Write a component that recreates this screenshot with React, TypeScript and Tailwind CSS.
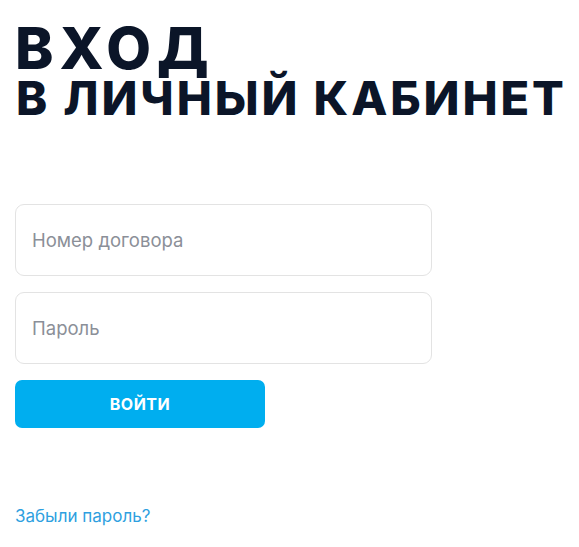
export default function App() {
  return (
    <div className="min-h-[547px] bg-white px-[15px] pt-[19px] font-['Inter',sans-serif]">
      <h1 className="text-[#0b1528] font-extrabold uppercase whitespace-nowrap">
        <span className="block text-[58px] leading-[58px] tracking-[6px]">Вход</span>
        <span className="block text-[47px] leading-[48px] tracking-[2.9px] pl-[1px] -mt-[3px]">В личный кабинет</span>
      </h1>

      <form className="mt-[82px] w-[417px] flex flex-col">
        <input
          type="text"
          placeholder="Номер договора"
          className="h-[72px] rounded-[9px] border border-[#e3e3e3] px-[16px] text-[18.5px] text-[#1a1a1a] placeholder:text-[#8b8f98] outline-none"
        />
        <input
          type="password"
          placeholder="Пароль"
          className="mt-[16px] h-[72px] rounded-[9px] border border-[#e3e3e3] px-[16px] text-[18.5px] text-[#1a1a1a] placeholder:text-[#8b8f98] outline-none"
        />
        <button
          type="button"
          className="mt-[16px] h-[48px] w-[250px] rounded-[7px] bg-[#00aeef] text-white text-[16px] font-bold tracking-[0.5px]"
        >
          ВОЙТИ
        </button>
      </form>

      <a href="#" className="mt-[76px] inline-block text-[17px] text-[#2e9fe0]">
        Забыли пароль?
      </a>
    </div>
  );
}
